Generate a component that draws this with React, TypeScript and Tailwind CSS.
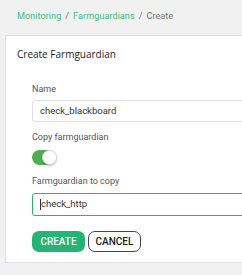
import React from "react";

export default function App() {
  return (
    <div className="w-[242px] h-[275px] overflow-hidden bg-[#f1f1f1]" style={{ fontFamily: "Roboto, sans-serif" }}>
      <div className="h-[35px] pl-[17px] pt-[10px] text-[9.2px] leading-[12px] text-[#777]">
        <span className="text-[#45bf83]">Monitoring</span>
        <span className="mx-[4px]">/</span>
        <span className="text-[#45bf83]">Farmguardians</span>
        <span className="mx-[4px]">/</span>
        <span>Create</span>
      </div>
      <div className="ml-[5px] w-[260px] h-[228px] border border-[#dde0e6] bg-white">
        <div className="pl-[11px] pt-[11px] text-[10px] leading-[14px] text-[#222]" style={{ fontFamily: "'Open Sans', sans-serif" }}>
          Create Farmguardian
        </div>
        <div className="pl-[26px] pt-[23px] flex flex-col">
          <label className="text-[9px] leading-[11px] text-[#555]">Name</label>
          <div className="mt-[5px] h-[22px] w-[240px] border border-[#dde0e6] rounded-[3px] pl-[7px] flex items-center text-[9.5px] text-[#333]">
            check_blackboard
          </div>
          <label className="mt-[10px] text-[9px] leading-[11px] text-[#555]">Copy farmguardian</label>
          <div className="mt-[7px] w-[24px] h-[15px] rounded-full bg-[#4cb050] relative">
            <div className="absolute right-[-1px] top-[0px] w-[15px] h-[15px] rounded-full bg-white border border-[#ddd] shadow-[0_1px_2px_rgba(0,0,0,0.25)]" />
          </div>
          <label className="mt-[11px] text-[9px] leading-[11px] text-[#555]">Farmguardian to copy</label>
          <div className="mt-[6px] h-[23px] w-[240px] border border-[#26b574] rounded-[3px] pl-[7px] flex items-center text-[9.5px] text-[#333]">
            <span className="w-px h-[11px] bg-[#333]" />
            check_http
          </div>
          <div className="mt-[15px] flex gap-[3px]">
            <button className="w-[53px] h-[21px] rounded-[7px] bg-[#22b573] text-white text-[10px] font-medium">CREATE</button>
            <button className="w-[53px] h-[21px] rounded-[7px] border border-[#444] bg-white text-[#222] text-[10px] font-medium">CANCEL</button>
          </div>
        </div>
      </div>
    </div>
  );
}
